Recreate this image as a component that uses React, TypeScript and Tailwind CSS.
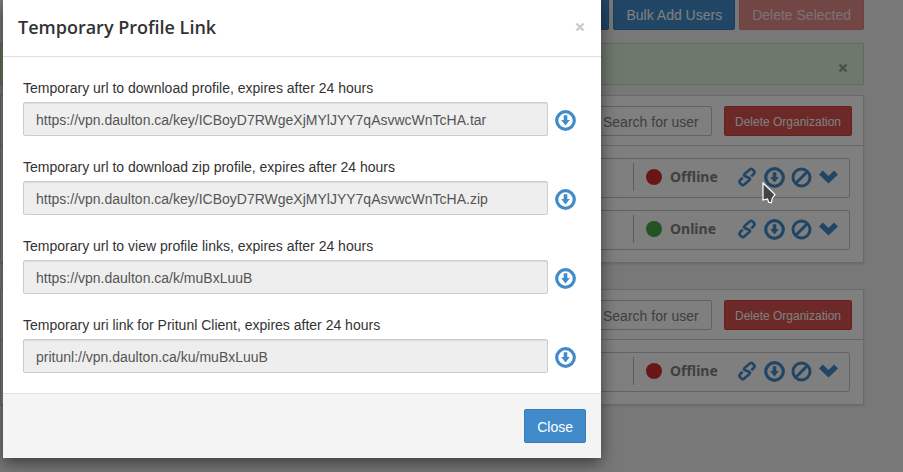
import type { ReactNode } from "react";

const sans = "font-['Liberation_Sans',Arial,sans-serif]";
const heading = "font-['Noto_Sans','Open_Sans',sans-serif]";

function DownloadIcon() {
  return (
    <svg viewBox="0 0 21 21" className="size-[21px]" aria-hidden="true">
      <circle cx="10.5" cy="10.5" r="8.8" fill="none" stroke="currentColor" strokeWidth="3.2" />
      <path d="M8.7 5.2h3.6v4.8h2.5l-4.3 5.4-4.3-5.4h2.5z" fill="currentColor" />
    </svg>
  );
}

function BanIcon() {
  return (
    <svg viewBox="0 0 21 21" className="size-[21px]" aria-hidden="true">
      <circle cx="10.5" cy="10.5" r="8.5" fill="none" stroke="currentColor" strokeWidth="3" />
      <path d="M4.5 16.5l12-12" stroke="currentColor" strokeWidth="3" />
    </svg>
  );
}

function LinkIcon() {
  return (
    <svg
      viewBox="0 0 20 20"
      className="size-5"
      fill="none"
      stroke="currentColor"
      strokeWidth="2.6"
      strokeLinejoin="round"
      aria-hidden="true"
    >
      <path d="M13.3 9.4 16.1 6.5Q17.1 5.3 16.1 4.1L14.5 2.3Q13.4 1.1 12.1 2.3L6.5 7Q5.4 8.3 6.6 9L11.4 11Q12.6 11.7 11.5 13L5.9 17.7Q4.6 18.9 3.5 17.7L1.9 15.9Q.9 14.7 1.9 13.5L4.7 10.6" />
    </svg>
  );
}

function ChevronIcon() {
  return (
    <svg viewBox="0 0 20 14" className="h-[14px] w-5" aria-hidden="true">
      <path d="M4.8.6 10.5 6l5.6-5.4L20 4.5l-9.5 9.1L1 4.5z" fill="currentColor" />
    </svg>
  );
}

function CloseIcon() {
  return (
    <svg viewBox="0 0 10 10" className="size-[10px]" aria-hidden="true">
      <path d="M1.5 1.5l7 7M8.5 1.5l-7 7" stroke="currentColor" strokeWidth="2.4" />
    </svg>
  );
}

function IconButton({ label, children }: { label: string; children: ReactNode }) {
  return (
    <button type="button" aria-label={label} className="flex items-center justify-center text-[#428bca]">
      {children}
    </button>
  );
}

function UserRow({ online }: { online: boolean }) {
  return (
    <li className="flex h-10 items-center justify-end rounded-xs border border-[#c4c4c4] bg-white pr-[11px] pb-0.5">
      <div className="flex h-7 items-center border-l border-[#bbb] pl-3">
        <span className={`size-4 rounded-full ${online ? "bg-[#46a546]" : "bg-[#d72c2c]"}`} />
        <span className={`ml-2 w-[68px] text-sm font-bold text-[#808080] ${heading}`}>
          {online ? "Online" : "Offline"}
        </span>
      </div>
      <div className="flex items-center gap-[6px]">
        <IconButton label="Profile link"><LinkIcon /></IconButton>
        <IconButton label="Download profile"><DownloadIcon /></IconButton>
        <IconButton label="Disable user"><BanIcon /></IconButton>
        <IconButton label="Show more"><ChevronIcon /></IconButton>
      </div>
    </li>
  );
}

function Organization({ users }: { users: boolean[] }) {
  return (
    <section className="border border-[#d4d4d4] bg-white shadow-sm">
      <div className="flex h-[50px] items-center justify-end gap-3 border-b border-[#d0d0d0] pr-[11px]">
        <input
          type="text"
          aria-label="Search for user"
          placeholder="Search for user"
          className="h-[30px] w-[122px] rounded-xs border border-[#c4c4c4] px-3 pt-0.5 text-sm placeholder:text-[#808080]"
        />
        <button
          type="button"
          className="h-[30px] w-32 rounded-xs border border-[#d43f3a] bg-[#d9534f] pt-0.5 text-xs text-white"
        >
          Delete Organization
        </button>
      </div>
      <ul className="flex flex-col gap-3 px-[13px] py-3">
        {users.map((online, i) => (
          <UserRow key={i} online={online} />
        ))}
      </ul>
    </section>
  );
}

const links = [
  { id: "tar", label: "Temporary url to download profile, expires after 24 hours", url: "https://vpn.daulton.ca/key/ICBoyD7RWgeXjMYlJYY7qAsvwcWnTcHA.tar" },
  { id: "zip", label: "Temporary url to download zip profile, expires after 24 hours", url: "https://vpn.daulton.ca/key/ICBoyD7RWgeXjMYlJYY7qAsvwcWnTcHA.zip" },
  { id: "view", label: "Temporary url to view profile links, expires after 24 hours", url: "https://vpn.daulton.ca/k/muBxLuuB" },
  { id: "client", label: "Temporary uri link for Pritunl Client, expires after 24 hours", url: "pritunl://vpn.daulton.ca/ku/muBxLuuB" },
];

function ProfileDialog() {
  return (
    <div
      role="dialog"
      aria-modal="true"
      aria-labelledby="dialog-title"
      className="absolute top-0 left-[3px] w-[598px] bg-white text-[#333] shadow-[0_5px_15px_rgba(0,0,0,0.5)]"
    >
      <header className="flex h-[57px] items-center justify-between border-b border-[#e0e0e0] pr-4 pb-0.5 pl-[15px]">
        <h4 id="dialog-title" className="font-['Open_Sans','Noto_Sans',sans-serif] text-lg font-semibold">
          Temporary Profile Link
        </h4>
        <button type="button" aria-label="Dismiss" className="text-[#ccc]">
          <CloseIcon />
        </button>
      </header>
      <div className="flex flex-col gap-[21px] px-5 pt-[21px] pb-5">
        {links.map((link) => (
          <div key={link.id}>
            <label htmlFor={link.id} className="mb-1 block text-sm leading-5">
              {link.label}
            </label>
            <div className="flex items-center gap-[7px]">
              <input
                id={link.id}
                type="text"
                readOnly
                defaultValue={link.url}
                className="h-[34px] w-[525px] min-w-0 rounded-xs border border-[#ccc] bg-[#eee] px-3 pt-0.5 text-sm text-[#555] shadow-[inset_0_1px_1px_rgba(0,0,0,0.075)]"
              />
              <div className="pt-0.5">
                <IconButton label="Download"><DownloadIcon /></IconButton>
              </div>
            </div>
          </div>
        ))}
      </div>
      <footer className="flex justify-end border-t border-[#e0e0e0] bg-[#f4f4f4] p-[15px]">
        <button
          type="button"
          className="h-[34px] rounded-xs border border-[#357ebd] bg-[#428bca] px-3 pt-0.5 text-sm text-white"
        >
          Close
        </button>
      </footer>
    </div>
  );
}

export default function App() {
  return (
    <div className={`relative min-h-screen overflow-hidden bg-[#f1f1f1] ${sans}`}>
      <main className="mr-[39px]">
        <div className="-mt-0.5 flex justify-end gap-1 text-sm text-white">
          <button type="button" className="h-8 rounded-xs border border-[#357ebd] bg-[#428bca] px-3 pt-0.5">
            Add User
          </button>
          <button type="button" className="h-8 rounded-xs border border-[#357ebd] bg-[#428bca] px-3 pt-0.5">
            Bulk Add Users
          </button>
          <button
            type="button"
            disabled
            className="h-8 rounded-xs border border-[#df8380] bg-[#e58d8a] px-3 pt-0.5 text-[#f8e2e1]"
          >
            Delete Selected
          </button>
        </div>
        <div className="mt-[13px] flex h-[42px] items-center justify-end border border-[#b9dba9] bg-[#dff0d8] pr-[15px]">
          <button type="button" aria-label="Dismiss message" className="mt-2 text-[#8fa58a]">
            <CloseIcon />
          </button>
        </div>
        <div className="mt-[10px] flex flex-col gap-[26px]">
          <Organization users={[false, true]} />
          <Organization users={[false]} />
        </div>
      </main>
      <div className="absolute inset-0 bg-black/50" />
      <ProfileDialog />
      <svg viewBox="0 0 14 22" className="absolute top-[182px] left-[762px] h-[22px] w-[14px]" aria-hidden="true">
        <path d="M1 1v17l4.5-1 1.2 3.2 2.6.6 1-4.6 2.7-3.7z" fill="#444" stroke="#fff" strokeWidth="1.2" />
      </svg>
    </div>
  );
}
